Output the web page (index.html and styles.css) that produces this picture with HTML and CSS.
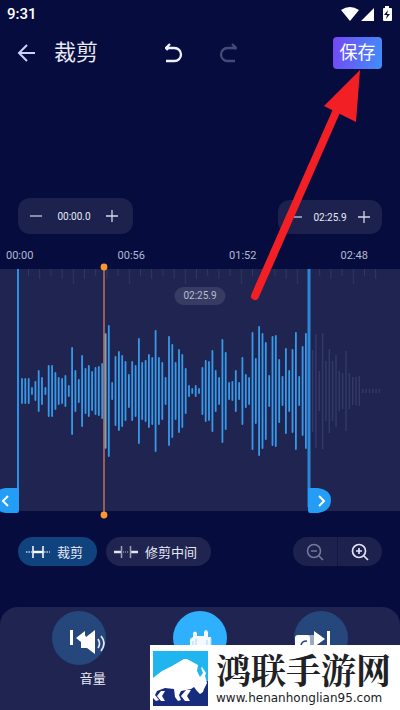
FILE: index.html
```html
<!DOCTYPE html>
<html lang="zh-CN">
<head>
<meta charset="utf-8">
<meta name="viewport" content="width=device-width, initial-scale=1">
<title>裁剪</title>
<link rel="stylesheet" href="styles.css">
</head>
<body>
<div class="status">
  <span>9:31</span>
  <svg width="52" height="16" viewBox="0 0 52 16" aria-hidden="true">
    <path d="M0 4Q9-2 18 4L9 15zM33 2v13H20zM44 2V0h4v2h2q1 0 1 1v11q0 1-1 1h-7q-1 0-1-1V3q0-1 1-1z" fill="#fff"/>
    <path d="M47 4l-4 5h3l-1 4 4-5h-3z" fill="#060d3e"/>
  </svg>
</div>
<header class="bar">
  <button class="icon" aria-label="返回"><svg width="20" height="18" viewBox="0 0 20 18"><path d="M18 9H2M10 1L2 9l8 8" stroke="#cdd1f7" stroke-width="2"/></svg></button>
  <h1>裁剪</h1>
  <div class="history">
    <button class="icon" aria-label="撤销"><svg width="18" height="20" viewBox="0 0 18 20"><path d="M1 5h8.500a6.500 6.500 0 0 1 0 13H1M5 1L1 5l2 2" stroke="#f0f1ff" stroke-width="2.3"/></svg></button>
    <button class="icon" aria-label="重做"><svg width="18" height="20" viewBox="0 0 18 20"><path d="M17 5H8.500a6.500 6.500 0 0 0 0 13H16M13 1l4 4-2 1" stroke="#454b77" stroke-width="2.3"/></svg></button>
  </div>
  <button class="save">保存</button>
</header>

<main>
  <div class="steppers">
    <div class="stepper">
      <button class="icon" aria-label="减少开始时间"><svg width="12" height="12" viewBox="0 0 12 12"><path d="M0 6h12" stroke="#c5c8e0" stroke-width="1.3"/></svg></button>
      <output>00:00.0</output>
      <button class="icon" aria-label="增加开始时间"><svg width="12" height="12" viewBox="0 0 12 12"><path d="M0 6h12M6 0v12" stroke="#d5d7e8" stroke-width="1.3"/></svg></button>
    </div>
    <div class="stepper stepper-end">
      <button class="icon" aria-label="减少结束时间"><svg width="12" height="12" viewBox="0 0 12 12"><path d="M0 6h12" stroke="#c5c8e0" stroke-width="1.3"/></svg></button>
      <output>02:25.9</output>
      <button class="icon" aria-label="增加结束时间"><svg width="12" height="12" viewBox="0 0 12 12"><path d="M0 6h12M6 0v12" stroke="#d5d7e8" stroke-width="1.3"/></svg></button>
    </div>
  </div>
  <div class="times"><span>00:00</span><span>00:56</span><span>01:52</span><span>02:48</span></div>
  <div class="wave">
    <svg class="wave-art" viewBox="0 0 400 254" aria-label="音频波形" role="img">
      <path d="M0 6h400v242H0z" fill="#1f2550"/>
      <path id="ticks" stroke="#323860"/>
      <path id="rest" stroke="#343a66" stroke-width="1.4"/>
      <path id="bars" stroke="#379ae9" stroke-width="1.8" stroke-linecap="round"/>
      <path d="M18 6v238" stroke="#2992e8" stroke-width="2"/>
      <path d="M309 6v238" stroke="#2b86d5" stroke-width="3"/>
      <path d="M104 4v245" stroke="#b77361" stroke-width="1.5"/>
      <path d="M105.500 71v114" stroke="#8b9ca9" stroke-width="1.6"/>
      <circle cx="104" cy="4" r="3.400" fill="#ff962d"/><circle cx="104" cy="252" r="3.400" fill="#ff962d"/>
      <path d="M19 225H6Q0 225-4 230v14q4 6 10 6h11q2 0 2-3z" fill="#239df5"/>
      <path d="M308 225h10q13 2 13 12 0 11-13 13h-8q-2 0-2-3z" fill="#239df5"/>
      <path d="M8 233l-5 5 5 5M319 233l5 5-5 5" stroke="#fff" stroke-width="2"/>
    </svg>
    <span class="duration">02:25.9</span>
  </div>
  <div class="modes">
    <button class="pill active"><svg width="24" height="12" viewBox="0 0 24 12"><path d="M0 6h6M18 6h6" stroke="#8eb0d5" stroke-width="2" stroke-dasharray="1.5 1"/><path d="M7 6h10" stroke="#fff" stroke-width="2.4"/><path d="M7 0v12M17 0v12" stroke="#fff" stroke-width="1.5"/></svg>裁剪</button>
    <button class="pill"><svg width="24" height="12" viewBox="0 0 24 12"><path d="M0 6h7M17 6h7" stroke="#e3e4ef" stroke-width="2.4"/><path d="M9 6h6" stroke="#8b8eaa" stroke-width="1.5" stroke-dasharray="1 1"/><path d="M7.500 0v12M16.500 0v12" stroke="#9b9eb8" stroke-width="1.5"/></svg>修剪中间</button>
    <div class="zoom">
      <button class="icon" aria-label="缩小"><svg width="18" height="18" viewBox="0 0 18 18"><circle cx="8" cy="8" r="6.500" stroke="#747899" stroke-width="1.6"/><path d="M5 8h6M13 13l4 4" stroke="#747899" stroke-width="1.6"/></svg></button>
      <button class="icon" aria-label="放大"><svg width="18" height="18" viewBox="0 0 18 18"><circle cx="8" cy="8" r="6.500" stroke="#e2e3fa" stroke-width="1.7"/><path d="M5 8h6M8 5v6M13 13l4 4" stroke="#e2e3fa" stroke-width="1.7"/></svg></button>
    </div>
  </div>
</main>

<nav class="tools">
  <button class="tool"><svg width="54" height="54" viewBox="0 0 54 54"><circle cx="27" cy="27" r="27" fill="#25477b"/><path d="M18 19h3v15h-3zM24 27l9-7v4l1 2 9-7v24l-8-6h-6v-6z" fill="#fff"/><path d="M46 28q3 5 0 9M49 25q6 7 0 15" stroke="#e7ebf5" stroke-width="1.7"/></svg><span>音量</span></button>
  <button class="tool" aria-label="播放"><svg width="54" height="54" viewBox="0 0 54 54"><circle cx="27" cy="27" r="27" fill="#2fb0ff"/><path d="M17 28l3-2v-4q2-3 4 0v3h7v-4q2-4 4 0v5h3v14H17z" fill="#f3f9fe"/><path d="M20 30v8M23 28v8M34 29v8M38 27v9" stroke="#9edaff"/></svg></button>
  <button class="tool" aria-label="下一段"><svg width="54" height="54" viewBox="0 0 54 54"><circle cx="27" cy="27" r="27" fill="#25477b"/><path d="M12 24h8v11h-8z" fill="#9aabc5"/><path d="M1 27q0-3 3-3h9q3 0 3 3v8H1zM20 20l11 8-11 8zM33 20h3v15h-3z" fill="#fff"/><path d="M7 35q0-5 6-5" stroke="#25477b" stroke-width="1.5"/></svg></button>
</nav>

<svg class="pointer" width="120" height="240" viewBox="0 0 120 240" aria-hidden="true"><path d="M7 228L88 44" stroke="#f21f25" stroke-width="8" stroke-linecap="round"/><path d="M112 2L76 38 108 54z" fill="#f21f25"/></svg>

<footer class="brand">
  <svg width="55" height="55" viewBox="0 0 55 55" aria-hidden="true">
    <path d="M0 0h55v55H0z" fill="#20b5ee"/><path d="M0 30h55v25H0z" fill="#182c7e"/>
    <path d="M0 27L9 20 19 15 31 8 34 8 45 14 44 20 47 26 50 22 48 17 49 16 53 22 52 25 54 32 51 38 50 41 47 43 44 40 41 36 38 38 28 40 26 44 28 49 25 50 22 46 21 38 12 37 4 40 2 44 6 49 3 50 0 47z" fill="#fff"/>
    <path d="M12 40H8l-4 5 4 5h4l-3-5zM38 39h-5l-5 6 4 5h5l-3-5z" fill="#fff"/>
  </svg>
  <div><strong>鸿联手游网</strong><span>www.henanhonglian95.com</span></div>
</footer>
<script src="wave.js"></script>
</body>
</html>
```
FILE: styles.css
```css
* { box-sizing: border-box; }
body {
  margin: 0;
  min-height: 100vh;
  display: flex;
  flex-direction: column;
  position: relative;
  overflow-x: hidden;
  background: #060d3e;
  color: #e8e9f5;
  font-family: Roboto, "Noto Sans CJK SC", sans-serif;
}
button { border: 0; padding: 0; background: none; color: inherit; font: inherit; }
svg { display: block; fill: none; flex: none; }
.icon { display: grid; place-items: center; }
.status {
  display: flex;
  justify-content: space-between;
  align-items: center;
  height: 28px;
  padding: 0 7px;
  font-size: 15px;
  font-weight: 500;
  color: #fff;
}
.bar { display: flex; align-items: center; height: 50px; padding: 0 18px 0 17px; }
h1 { margin: 0 0 0 17px; font-size: 22px; line-height: 32px; font-weight: 400; }
.history { display: flex; gap: 36px; margin: 0 auto 0 67px; }
.save {
  width: 49px;
  height: 32px;
  border-radius: 4px;
  background: linear-gradient(100deg, #7547f5, #408ffa);
  color: #fff;
  font-size: 18px;
  line-height: 24px;
}
.steppers { display: flex; justify-content: space-between; padding: 120px 18px 0; }
.stepper {
  display: flex;
  align-items: center;
  justify-content: space-between;
  width: 115px;
  height: 36px;
  padding: 0 15px 0 12px;
  border-radius: 12px;
  background: #1c224d;
  font-size: 10px;
}
.stepper-end { width: 104px; height: 34px; padding: 0 12px; margin-top: 2px; }
.times {
  display: flex;
  justify-content: space-between;
  margin-top: 15px;
  padding: 0 32px 0 6px;
  color: #b5b8d1;
  font-size: 11px;
  line-height: 14px;
}
.wave { position: relative; }
.wave-art { width: 100%; height: auto; overflow: visible; }
.duration {
  position: absolute;
  top: 24px;
  left: 50%;
  transform: translateX(-50%);
  padding: 0 9px;
  border-radius: 9px;
  background: #373c64;
  color: #b9bbd0;
  font-size: 10px;
  line-height: 18px;
}
.modes { display: flex; gap: 9px; padding: 20px 18px 0; }
.pill {
  display: flex;
  align-items: center;
  gap: 7px;
  height: 29px;
  padding: 0 14px 0 8px;
  border-radius: 15px;
  background: #1f2550;
  font-size: 13px;
}
.active { background: #10427d; }
.zoom { display: flex; width: 89px; height: 29px; margin-left: auto; border-radius: 15px; background: #1c224d; }
.zoom button { flex: 1; }
.zoom button + button { border-left: 1px solid #12183f; }
.tools {
  flex: 1;
  display: grid;
  grid-template-columns: repeat(3, 1fr);
  justify-items: center;
  align-items: start;
  min-height: 102px;
  margin-top: 41px;
  padding: 4px 18px 0;
  border-radius: 18px 18px 0 0;
  background: #1f2550;
}
.tool { display: flex; flex-direction: column; align-items: center; gap: 4px; font-size: 13px; line-height: 20px; }
.tool span { padding-left: 28px; }
.pointer { position: absolute; top: 68px; right: 32px; pointer-events: none; }
.brand {
  position: absolute;
  right: 0;
  bottom: 0;
  display: flex;
  gap: 8px;
  width: 250px;
  height: 65px;
  padding: 6px 3px 4px;
  background: #fff;
  color: #202125;
}
.brand div { display: flex; flex-direction: column; }
.brand strong { font-family: "Noto Serif CJK SC", "Noto Sans CJK SC", serif; font-size: 35px; line-height: 36px; font-weight: 700; }
.brand span { font-family: "DejaVu Sans", sans-serif; font-size: 12px; line-height: 22px; }
```
FILE: wave.js
```js
const PITCH = 3.34, START = 22, MID = 128;
const selected = [12,12,12,3,9,20,13,3,25,25,18,13,12,15,5,43,20,11,35,22,25,19,23,24,27,57,65,
  8,34,39,35,29,16,29,25,52,28,30,36,33,60,33,28,13,54,46,28,41,36,22,5,2,5,2,23,30,29,40,20,13,51,38,8,9,20,8,33,16,13,
  58,32,64,57,48,15,54,55,31,14,42,20,41,58,14,44,57];
const remaining = [41,57,20,58,30,42,30,36,20,18,40,18,14,14,15,2,2,2,2,2,2];

function bars(values, first) {
  return values.map((h, i) => `M${(START + (first + i) * PITCH).toFixed(1)} ${MID - h}v${2 * h}`).join("");
}
document.getElementById("bars").setAttribute("d", bars(selected, 0));
document.getElementById("rest").setAttribute("d", bars(remaining, selected.length + 1));

let ticks = "";
for (let i = 0; i < 32; i++) ticks += `M${(28.5 + i * 11.2).toFixed(1)} 6v${i % 5 === 4 ? 15 : i % 2 ? 10 : 7}`;
document.getElementById("ticks").setAttribute("d", ticks);
```
